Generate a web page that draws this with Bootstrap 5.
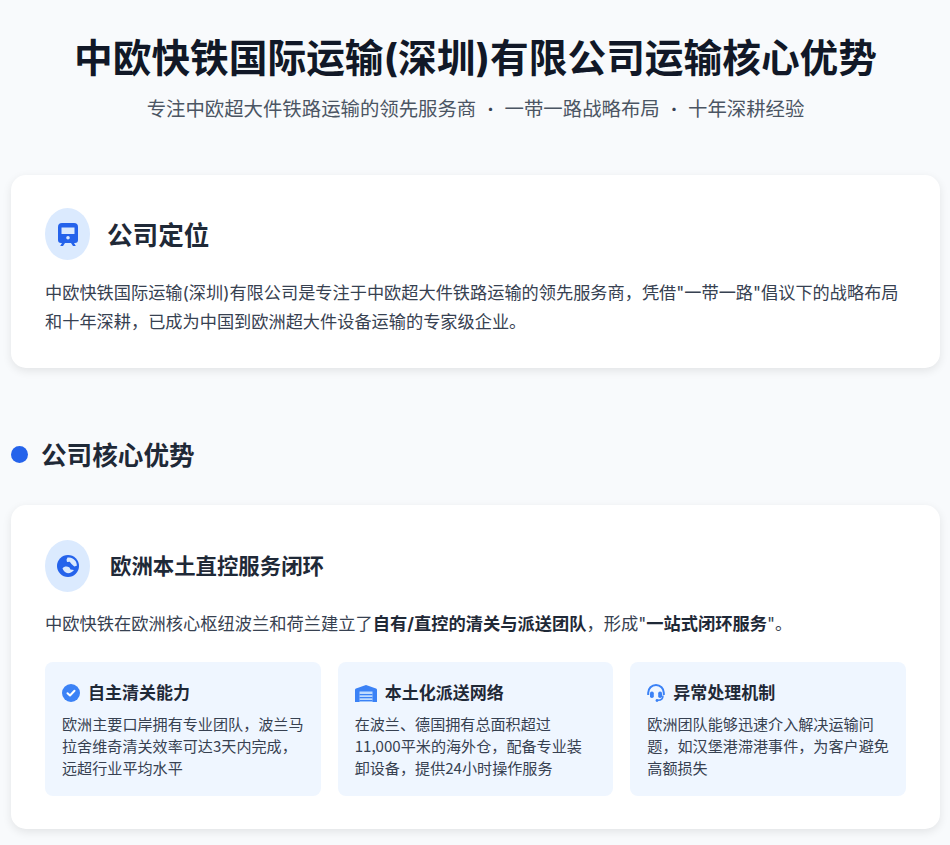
<!DOCTYPE html>
<html lang="zh"><head><meta charset="utf-8"><title>运输核心优势</title>
<link href="https://cdn.jsdelivr.net/npm/bootstrap@5.3.0/dist/css/bootstrap.min.css" rel="stylesheet">
<style>
html,body{height:845px;overflow:hidden}
body{background:#f8fafc;font-family:"Inter","Noto Sans CJK SC",sans-serif;color:#1f2937}
.page-wrap{padding:29px 10px 0 11px}
.main-title{font-size:38.7px;font-weight:700;line-height:58px;color:#111827;margin:0;text-align:center}
.sub-title{font-size:19.4px;line-height:28px;color:#4b5563;margin:8px 0 0;text-align:center}
.sep-dot{font-weight:700;color:#374151}
.panel{background:#fff;border-radius:15px;box-shadow:0 3px 10px rgba(0,0,0,.09)}
.panel-one{margin-top:52px;height:193px;padding:33px 34px 0}
.panel-two{margin-top:30px;height:324px;padding:35px 34px 0}
.icon-disc{width:45px;height:52px;border-radius:50%;background:#dbeafe;color:#2563eb;flex:none}
.head-one{font-size:25.6px;font-weight:700;color:#1f2937;margin:0 0 0 17px;line-height:56px}
.body-text{font-size:17.2px;line-height:28.5px;color:#374151;margin:15px 0 0}
.section-head{margin-top:65px;height:42px}
.dot{width:17px;height:17px;border-radius:50%;background:#2563eb;flex:none}
.section-title{font-size:25.6px;font-weight:700;color:#1f2937;margin:0 0 0 13px;line-height:42px;padding-top:3px}
.head-two{font-size:21.4px;font-weight:700;color:#1f2937;margin:0 0 0 20px;line-height:52px}
.lead-text{font-size:17.25px;line-height:30px;color:#374151;margin:17px 0 0}
.lead-text strong{font-weight:700;color:#1f2937}
.tile-row{display:grid;grid-template-columns:repeat(3,1fr);gap:17px;margin-top:23px}
.tile{background:#eff6ff;border-radius:8px;height:134px;padding:17px 17px 0 17px}
.tile-head{font-size:17px;font-weight:700;color:#1f2937;line-height:28px;margin:0}
.tile-head svg{flex:none;display:block}
.tile-text{font-family:"Noto Sans CJK SC",sans-serif;font-size:15.1px;line-height:22.2px;color:#374151;margin:5px 0 0}
</style></head>
<body>
<div class="page-wrap">
  <h1 class="main-title">中欧快铁国际运输(深圳)有限公司运输核心优势</h1>
  <p class="sub-title">专注中欧超大件铁路运输的领先服务商 &nbsp;<span class="sep-dot">·</span>&nbsp; 一带一路战略布局 &nbsp;<span class="sep-dot">·</span>&nbsp; 十年深耕经验</p>

  <div class="panel panel-one">
    <div class="d-flex align-items-start">
      <div class="icon-disc d-flex align-items-center justify-content-center">
        <svg width="20" height="23" viewBox="0 0 20 23"><path fill="#2563eb" fill-rule="evenodd" d="M4 0h12a4 4 0 0 1 4 4v13a3 3 0 0 1-3 3H3a3 3 0 0 1-3-3V4a4 4 0 0 1 4-4ZM3.500 4.500v6.500h13V4.500ZM10 13a1.800 1.800 0 1 0 0 3.600a1.800 1.800 0 0 0 0-3.600Z"/><path fill="#2563eb" d="M4 20h3l-2 3H2.200ZM13 20h3l1.800 3H15Z"/></svg>
      </div>
      <h2 class="head-one">公司定位</h2>
    </div>
    <p class="body-text">中欧快铁国际运输(深圳)有限公司是专注于中欧超大件铁路运输的领先服务商，凭借"一带一路"倡议下的战略布局和十年深耕，已成为中国到欧洲超大件设备运输的专家级企业。</p>
  </div>

  <div class="section-head d-flex align-items-center">
    <span class="dot"></span>
    <h2 class="section-title">公司核心优势</h2>
  </div>

  <div class="panel panel-two">
    <div class="d-flex align-items-center">
      <div class="icon-disc d-flex align-items-center justify-content-center">
        <svg width="22" height="22" viewBox="0 0 22 22"><circle cx="11" cy="11" r="11" fill="#2563eb"/><path fill="#dbeafe" d="M10.500 2.500c3.500-.5 6 .8 7.800 3.200 1 1.400 1.500 3 1.500 5l-2.500.8-2.800-2.500-1.800-2.200-2.700.2-.5-2.200ZM5.500 13.500c1.500-2.200 4.500-2.500 7-1l1 2 3.500.5c-1.500 2-3.500 3.200-6 3.200-2.500 0-4.500-2-5.500-4.700Z"/></svg>
      </div>
      <h3 class="head-two">欧洲本土直控服务闭环</h3>
    </div>
    <p class="lead-text">中欧快铁在欧洲核心枢纽波兰和荷兰建立了<strong>自有/直控的清关与派送团队</strong>，形成"<strong>一站式闭环服务</strong>"。</p>
    <div class="tile-row">
      <div class="tile">
        <div class="tile-head d-flex align-items-center gap-2">
          <svg width="18" height="18" viewBox="0 0 18 18"><circle cx="9" cy="9" r="9" fill="#3b82f6"/><path fill="none" stroke="#fff" stroke-width="2" stroke-linecap="round" stroke-linejoin="round" d="M5.500 9.200 8 11.500l4.500-4.700"/></svg>
          <span>自主清关能力</span>
        </div>
        <p class="tile-text">欧洲主要口岸拥有专业团队，波兰马拉舍维奇清关效率可达3天内完成，远超行业平均水平</p>
      </div>
      <div class="tile">
        <div class="tile-head d-flex align-items-center gap-2">
          <svg width="22" height="17" viewBox="0 0 22 17"><path fill="#3b82f6" d="M11 0 21 3.500a1.500 1.500 0 0 1 1 1.400V17H0V4.900a1.500 1.500 0 0 1 1-1.400Z"/><path fill="#bfdbfe" d="M4.500 6.500h13V17h-13Z"/><path fill="#3b82f6" d="M4.500 9h13v1.300h-13ZM4.500 12h13v1.300h-13ZM4.500 15h13v1.300h-13Z"/></svg>
          <span>本土化派送网络</span>
        </div>
        <p class="tile-text">在波兰、德国拥有总面积超过<br>11,000平米的海外仓，配备专业装<br>卸设备，提供24小时操作服务</p>
      </div>
      <div class="tile">
        <div class="tile-head d-flex align-items-center gap-2">
          <svg width="18" height="18" viewBox="0 0 18 18"><path fill="none" stroke="#3b82f6" stroke-width="2" d="M1.200 11V8.800a7.800 7.800 0 0 1 15.600 0V11"/><rect x="3" y="7.500" width="3.800" height="6.500" rx="1.800" fill="#3b82f6"/><rect x="11.200" y="7.500" width="3.800" height="6.500" rx="1.800" fill="#3b82f6"/><path fill="none" stroke="#3b82f6" stroke-width="1.500" d="M16 11.500c0 3.500-2 4.800-5 4.800"/><circle cx="10" cy="16.500" r="1.400" fill="#3b82f6"/></svg>
          <span>异常处理机制</span>
        </div>
        <p class="tile-text">欧洲团队能够迅速介入解决运输问题，如汉堡港滞港事件，为客户避免高额损失</p>
      </div>
    </div>
  </div>
</div>
<script src="https://cdn.jsdelivr.net/npm/bootstrap@5.3.0/dist/js/bootstrap.bundle.min.js"></script>
</body></html>
